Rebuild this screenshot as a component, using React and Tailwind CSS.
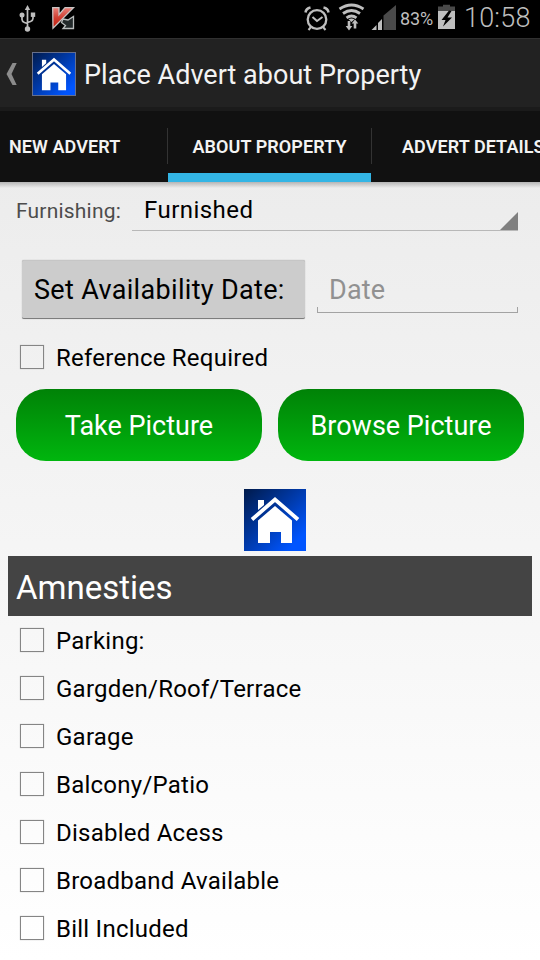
import React from "react";

function HouseIcon({ size, framed }) {
  const id = framed ? "houseBar" : "houseBody";
  return (
    <svg width={size} height={size} viewBox="0 0 62 62" className="block shrink-0">
      <defs>
        <linearGradient id={id} x1="0" y1="0" x2="1" y2="1">
          <stop offset="0" stopColor="#001a4a" />
          <stop offset="0.5" stopColor="#003cb0" />
          <stop offset="0.85" stopColor="#0055ff" />
          <stop offset="1" stopColor="#0055ff" />
        </linearGradient>
      </defs>
      <rect width="62" height="62" fill={`url(#${id})`} />
      <path d="M14 11h6v5l-6 5z" fill="#fff" />
      <path d="M8 30.500L31 10.500L54 30.500" fill="none" stroke="#fff" strokeWidth="3.800" />
      <path d="M14 31.500L31 17L48 31.500V54H37V43H26V54H14z" fill="#fff" />
      {framed && <rect x="0.700" y="0.700" width="60.600" height="60.600" fill="none" stroke="#67708c" strokeWidth="1.400" />}
    </svg>
  );
}

function StatusBar() {
  return (
    <div className="flex h-[38px] items-start bg-black text-[#bebebe]">
      <svg width="300" height="38" viewBox="0 0 300 38" className="block shrink-0">
        <g fill="none" stroke="#bebebe" strokeWidth="1.700">
          <path d="M27.500 8V28M22 16v3.500q0 2 2.500 3l3 1M33 15v3.500q0 2-2.500 3l-3 1" />
        </g>
        <g fill="#bebebe">
          <path d="M27.500 5l2.700 5h-5.400z" />
          <circle cx="22" cy="15" r="2.500" />
          <rect x="30.800" y="12.500" width="4.400" height="4.400" />
          <circle cx="27.500" cy="29" r="2.700" />
        </g>
        <defs>
          <linearGradient id="red" x1="0" y1="0" x2="0" y2="1">
            <stop offset="0" stopColor="#e98078" />
            <stop offset="0.5" stopColor="#cf3d30" />
            <stop offset="1" stopColor="#c21d0c" />
          </linearGradient>
        </defs>
        <path d="M63 19l5 1 5.500-3.500v12h-10.500l2.500-3-4-3z" fill="#232a2b" stroke="#b8bcbc" strokeWidth="1.300" />
        <path d="M52.700 7.700h6.300v7l6-7h8.500L53 28.300z" fill="url(#red)" stroke="#c9c5c4" strokeWidth="1.300" />
      </svg>
      <svg width="100" height="38" viewBox="300 0 100 38" className="block shrink-0">
        <g fill="none" stroke="#bebebe">
          <circle cx="317" cy="19.500" r="9.300" strokeWidth="2.300" />
          <path d="M312.500 17l4.500 4 5.500-4M311 27l-2.500 3M323 27l2.500 3" strokeWidth="2" />
          <path d="M305.500 12.500q.5-4 5-5M328.500 12.500q-.5-4-5-5" strokeWidth="2.500" />
          <path d="M339.500 9q12-8 24 0M343 13.500q8.500-6 17 0M346.500 17.800q5-3.600 10 0" strokeWidth="2.800" />
        </g>
        <path d="M348.500 19.300q3-1.500 6 0l-3 2.800zM347.700 21h2.600v5h2l-3.300 4.500-3.300-4.500h2zM353.700 28.500v-5h-2l3.300-4 3.300 4h-2v5z" fill="#bebebe" />
        <path d="M383.500 15.500L396 5v25h-12.500z" fill="#4a4a4a" />
        <path d="M371.500 30l5-5v5zM378 23l4-4v11h-4z" fill="#bebebe" />
      </svg>
      <span className="mt-[7px] w-[38px] whitespace-nowrap text-[18px] leading-[24px] tracking-[-0.100px]">83%</span>
      <svg width="18" height="38" viewBox="0 0 18 38" className="block shrink-0">
        <path d="M0 6.500h5V4.800h7v1.700h5V12H0z" fill="#4a4a4a" />
        <path d="M0 11h17v18H0z" fill="#bebebe" />
        <path d="M11 10.500L3.500 20h4L5 26.500l9-9H9.500L13.500 11z" fill="#000" />
      </svg>
      <span className="ml-[8px] mt-[1px] whitespace-nowrap text-[27px] leading-[34px] font-light tracking-[0.200px]">10:58</span>
    </div>
  );
}

function ActionBar() {
  return (
    <div className="flex h-[73px] items-center border-t border-b-4 border-t-[#303030] border-b-[#1b1b1b] bg-[#222222] pt-[2px]">
      <svg width="32" height="24" viewBox="0 0 32 24" className="block shrink-0">
        <path d="M12.500 1h4.200l-5.200 11 5.200 11h-4.200L6.500 12z" fill="#8c8c8c" />
      </svg>
      <HouseIcon size={44} framed />
      <h1 className="ml-[8px] whitespace-nowrap pt-[2px] text-[27px] leading-[36px] tracking-[0.020px] text-[#f3f3f3]">Place Advert about Property</h1>
    </div>
  );
}

function Tabs() {
  return (
    <nav className="flex h-[71px] overflow-hidden bg-[#111111] text-[18px] leading-[72px] font-semibold tracking-[0.080px] whitespace-nowrap text-[#f3f3f3]">
      <div className="flex w-[167px] shrink-0 pl-[9px]">NEW ADVERT</div>
      <div className="mt-[17px] h-[36px] w-px shrink-0 bg-[#333333]" />
      <div className="flex w-[203px] shrink-0 justify-center border-b-9 border-[#33b5e5]">ABOUT PROPERTY</div>
      <div className="mt-[17px] h-[36px] w-px shrink-0 bg-[#333333]" />
      <div className="w-[200px] shrink-0 pl-[30px]">ADVERT DETAILS</div>
    </nav>
  );
}

function CheckRow({ label }) {
  return (
    <label className="flex h-[48px] items-center pl-[20px] text-[24px] leading-[32px] text-black">
      <span className="h-[24px] w-[24px] shrink-0 border border-[#858585] shadow-[0_0_1px_#b5b5b5]" />
      <span className="ml-[12px] whitespace-nowrap pt-[2px] tracking-[0.240px]">{label}</span>
    </label>
  );
}

function PictureButton({ label }) {
  return (
    <button className="h-[72px] w-[246px] rounded-[30px] bg-linear-to-b from-[#008207] to-[#00b60e] text-[27px] leading-[74px] whitespace-nowrap text-white">
      {label}
    </button>
  );
}

const amenities = ["Parking:", "Gargden/Roof/Terrace", "Garage", "Balcony/Patio", "Disabled Acess", "Broadband Available", "Bill Included"];

export default function App() {
  return (
    <div className="flex h-[960px] w-[540px] flex-col overflow-hidden bg-linear-to-b from-[#e8e8e8] to-white font-[Roboto,sans-serif]">
      <StatusBar />
      <ActionBar />
      <Tabs />
      <div className="h-[6px] shrink-0 bg-linear-to-b from-[#b5b5b5] to-transparent" />
      <div className="flex h-[43px] shrink-0 pr-[22px] pl-[16px]">
        <span className="w-[116px] whitespace-nowrap pt-[8px] text-[21px] leading-[30px] tracking-[0.200px] text-[#4c4c4c]">Furnishing:</span>
        <div className="flex flex-1 items-end justify-between border-b border-[#b8b8b8] pl-[12px]">
          <span className="h-[36px] text-[24px] leading-[32px] tracking-[0.450px] text-black">Furnished</span>
          <svg width="18" height="18" viewBox="0 0 18 18" className="block">
            <path d="M18 0v18H0z" fill="#808080" />
          </svg>
        </div>
      </div>
      <div className="flex h-[102px] shrink-0 pt-[29px] pl-[22px]">
        <button className="h-[59px] w-[283px] rounded-[2px] border-t border-b border-t-[#c6c6c6] border-b-[#7d7d7d] bg-[#cccccc] pl-[12px] text-left text-[27px] leading-[58px] tracking-[0.330px] whitespace-nowrap text-black shadow-[0_0_1px_#999999]">
          Set Availability Date:
        </button>
        <div className="ml-[12px] flex h-[53px] w-[201px] flex-col">
          <span className="h-[47px] pl-[12px] text-[27px] leading-[61px] tracking-[0.200px] text-[#919191]">Date</span>
          <span className="h-[6px] border-x border-b border-[#a3a3a3]" />
        </div>
      </div>
      <CheckRow label="Reference Required" />
      <div className="mt-[8px] flex shrink-0 gap-[16px] pl-[16px]">
        <PictureButton label="Take Picture" />
        <PictureButton label="Browse Picture" />
      </div>
      <div className="mt-[28px] flex h-[67px] shrink-0 pl-[244px]">
        <HouseIcon size={62} />
      </div>
      <h2 className="mx-[8px] h-[60px] shrink-0 bg-[#444444] pl-[8px] text-[33px] leading-[64px] text-white">Amnesties</h2>
      <div className="shrink-0">
        {amenities.map((label) => (
          <CheckRow key={label} label={label} />
        ))}
      </div>
    </div>
  );
}
